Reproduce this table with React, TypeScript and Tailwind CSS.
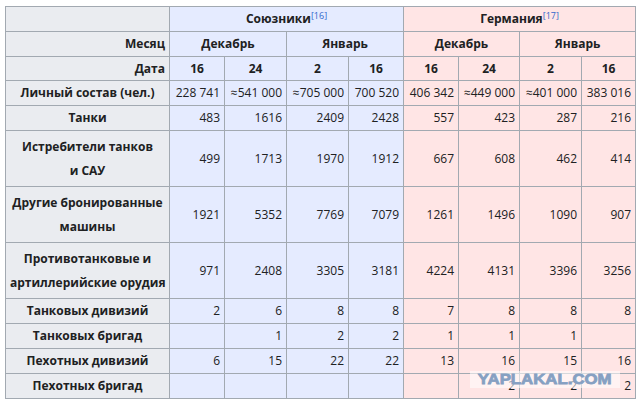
import React from "react";

const allies = "bg-[#e5ebff]";
const germany = "bg-[#ffe5e5]";
const gray = "bg-[#eaecf0]";
const cell = "border border-[#a2a9b1] px-[4px] py-0 whitespace-nowrap overflow-hidden";

type Row = { label: React.ReactNode; tall?: boolean; v: string[] };

const rows: Row[] = [
  { label: "Личный состав (чел.)", v: ["228 741", "≈541 000", "≈705 000", "700 520", "406 342", "≈449 000", "≈401 000", "383 016"] },
  { label: "Танки", v: ["483", "1616", "2409", "2428", "557", "423", "287", "216"] },
  { label: <>Истребители танков<br />и САУ</>, tall: true, v: ["499", "1713", "1970", "1912", "667", "608", "462", "414"] },
  { label: <>Другие бронированные<br />машины</>, tall: true, v: ["1921", "5352", "7769", "7079", "1261", "1496", "1090", "907"] },
  { label: <>Противотанковые и<br />артиллерийские орудия</>, tall: true, v: ["971", "2408", "3305", "3181", "4224", "4131", "3396", "3256"] },
  { label: "Танковых дивизий", v: ["2", "6", "8", "8", "7", "8", "8", "8"] },
  { label: "Танковых бригад", v: ["", "1", "2", "2", "1", "1", "1", ""] },
  { label: "Пехотных дивизий", v: ["6", "15", "22", "22", "13", "16", "15", "16"] },
  { label: "Пехотных бригад", v: ["", "", "", "", "", "2", "2", "2"] },
];

const widths = [164, 55, 62, 62, 55, 55, 61, 62, 54];

export default function App() {
  return (
    <div className="relative h-[408px] w-[640px] overflow-hidden bg-white pl-[5px] pt-[6px] text-[#202122]" style={{ fontFamily: "'Open Sans', sans-serif" }}>
      <table className="table-fixed border-collapse text-[12px]" style={{ width: 631 }}>
        <colgroup>
          {widths.map((w, i) => (
            <col key={i} style={{ width: w }} />
          ))}
        </colgroup>
        <thead>
          <tr className="h-[25px] font-bold">
            <th className={`${cell} ${gray}`}></th>
            <th colSpan={4} className={`${cell} ${allies} text-center`}>
              Союзники<sup className="text-[9px] font-normal text-[#3366cc]">[16]</sup>
            </th>
            <th colSpan={4} className={`${cell} ${germany} text-center`}>
              Германия<sup className="text-[9px] font-normal text-[#3366cc]">[17]</sup>
            </th>
          </tr>
          <tr className="h-[25px] font-bold">
            <th className={`${cell} ${gray} text-right`}>Месяц</th>
            <th colSpan={2} className={`${cell} ${allies} text-center`}>Декабрь</th>
            <th colSpan={2} className={`${cell} ${allies} text-center`}>Январь</th>
            <th colSpan={2} className={`${cell} ${germany} text-center`}>Декабрь</th>
            <th colSpan={2} className={`${cell} ${germany} text-center`}>Январь</th>
          </tr>
          <tr className="h-[24px] font-bold">
            <th className={`${cell} ${gray} text-right`}>Дата</th>
            {["16", "24", "2", "16"].map((d, i) => (
              <th key={"a" + i} className={`${cell} ${allies} text-center`}>{d}</th>
            ))}
            {["16", "24", "2", "16"].map((d, i) => (
              <th key={"g" + i} className={`${cell} ${germany} text-center`}>{d}</th>
            ))}
          </tr>
        </thead>
        <tbody>
          {rows.map((r, ri) => (
            <tr key={ri} className={r.tall ? "h-[56px]" : "h-[25px]"}>
              <th className={`${cell} ${gray} text-center font-bold ${r.tall ? "leading-[24px]" : ""}`}>{r.label}</th>
              {r.v.map((x, i) => (
                <td key={i} className={`${cell} ${i < 4 ? allies : germany} text-right`}>{x}</td>
              ))}
            </tr>
          ))}
        </tbody>
      </table>

      {/* watermark */}
      <div className="absolute left-[470px] top-[371px] flex h-[17px] w-[150px] items-center justify-center bg-white/55">
        <span
          className="origin-center scale-x-[1.12] text-[15px] font-bold text-[#86a0c2] [-webkit-text-stroke:0.8px_#86a0c2]"
          style={{ fontFamily: "'Liberation Sans', Arial, sans-serif" }}
        >
          YAPLAKAL.COM
        </span>
      </div>
    </div>
  );
}
